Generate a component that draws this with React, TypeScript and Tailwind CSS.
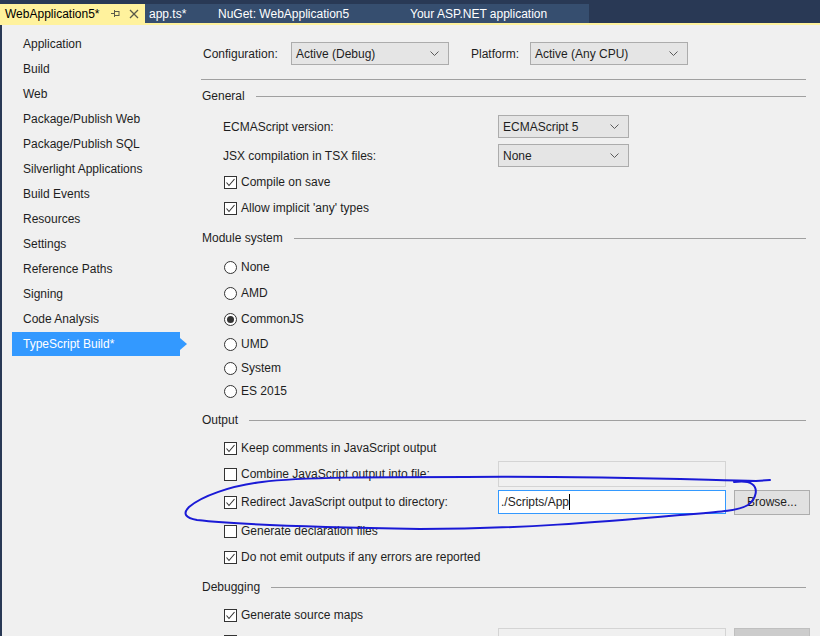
import React from 'react'

const font = { fontFamily: '"Liberation Sans", Arial, sans-serif' }

const sideItems = [
  'Application',
  'Build',
  'Web',
  'Package/Publish Web',
  'Package/Publish SQL',
  'Silverlight Applications',
  'Build Events',
  'Resources',
  'Settings',
  'Reference Paths',
  'Signing',
  'Code Analysis',
  'TypeScript Build*',
]

function Chevron() {
  return (
    <svg width="9" height="5" viewBox="0 0 9 5" className="shrink-0">
      <polyline points="0.5,0.5 4.5,4.5 8.5,0.5" fill="none" stroke="#5a5a5a" strokeWidth="1" />
    </svg>
  )
}

function Select({ value, width }: { value: string; width: string }) {
  return (
    <div className={`${width} h-[23px] flex items-center justify-between bg-[#e5e5e5] border border-[#acacac] pl-[4px] pr-[9px] text-[#1e1e1e]`}>
      <span>{value}</span>
      <Chevron />
    </div>
  )
}

function CheckBox({ checked }: { checked: boolean }) {
  return (
    <svg width="13" height="13" viewBox="0 0 13 13" className="shrink-0">
      <rect x="0.5" y="0.5" width="12" height="12" fill="#ffffff" stroke="#333333" />
      {checked && <polyline points="2.5,6.5 5,9.5 10.5,3" fill="none" stroke="#333333" strokeWidth="1.1" />}
    </svg>
  )
}

function Radio({ checked }: { checked: boolean }) {
  return (
    <svg width="13" height="13" viewBox="0 0 13 13" className="shrink-0">
      <circle cx="6.5" cy="6.5" r="6" fill="#ffffff" stroke="#333333" />
      {checked && <circle cx="6.5" cy="6.5" r="3.5" fill="#333333" />}
    </svg>
  )
}

function Section({ title, h }: { title: string; h: string }) {
  return (
    <div className={`flex items-center ${h} pl-px mr-[4px]`}>
      <span>{title}</span>
      <div className="flex-1 h-px bg-[#a0a0a0] ml-[11px]" />
    </div>
  )
}

function CheckRow({ label, checked, h, children }: { label: string; checked: boolean; h: string; children?: React.ReactNode }) {
  return (
    <div className={`flex items-center ${h} pl-[22px]`}>
      <div className="w-[275px] flex items-center gap-[4px] pl-px">
        <CheckBox checked={checked} />
        <span>{label}</span>
      </div>
      {children}
    </div>
  )
}

function RadioRow({ label, checked, h }: { label: string; checked?: boolean; h: string }) {
  return (
    <div className={`flex items-center ${h} pl-[23px] gap-[4px]`}>
      <Radio checked={!!checked} />
      <span>{label}</span>
    </div>
  )
}

function TabBar() {
  return (
    <div className="bg-[#293955] h-[25px] flex flex-col">
      <div className="h-[4px]" />
      <div className="flex h-[19px] text-[12px]">
        <div className="w-[145px] bg-[#fff29d] flex items-center pl-[5px] text-black">
          <span>WebApplication5*</span>
          <svg width="9" height="9" viewBox="0 0 9 9" className="ml-[11px]">
            <line x1="0" y1="4.5" x2="3" y2="4.5" stroke="#5a5a4a" />
            <line x1="3.5" y1="1" x2="3.5" y2="8" stroke="#5a5a4a" />
            <rect x="3.5" y="2.5" width="4.5" height="4" fill="none" stroke="#5a5a4a" />
          </svg>
          <svg width="10" height="10" viewBox="0 0 10 10" className="ml-[9px]">
            <line x1="1" y1="1" x2="9" y2="9" stroke="#5a5a4a" strokeWidth="1.3" />
            <line x1="9" y1="1" x2="1" y2="9" stroke="#5a5a4a" strokeWidth="1.3" />
          </svg>
        </div>
        <div className="flex bg-[#364e6f] text-white">
          <div className="w-[69px] flex items-center pl-[4px]">app.ts*</div>
          <div className="w-[192px] flex items-center pl-[4px]">NuGet: WebApplication5</div>
          <div className="w-[183px] flex items-center pl-[4px]">Your ASP.NET application</div>
        </div>
      </div>
      <div className="h-[2px] bg-[#fff29d]" />
    </div>
  )
}

function Sidebar() {
  return (
    <div className="w-[199px] shrink-0 pt-[6px] pl-[10px]">
      {sideItems.map((item) =>
        item === 'TypeScript Build*' ? (
          <div key={item} className="flex items-center h-[25px]">
            <div className="w-[168px] h-[24px] bg-[#3399ff] text-white flex items-center pl-[11px]">{item}</div>
            <svg width="7" height="12" viewBox="0 0 7 12">
              <polygon points="0,0 7,6 0,12" fill="#3399ff" />
            </svg>
          </div>
        ) : (
          <div key={item} className="h-[25px] flex items-center pl-[11px]">
            {item}
          </div>
        ),
      )}
    </div>
  )
}

function Panel() {
  return (
    <div className="flex-1 pr-[10px]">
      {/* configuration row */}
      <div className="flex items-center mt-[17px] h-[23px] pl-[2px]">
        <span className="w-[88px]">Configuration:</span>
        <Select value="Active (Debug)" width="w-[158px]" />
        <span className="w-[59px] ml-[22px]">Platform:</span>
        <Select value="Active (Any CPU)" width="w-[158px]" />
      </div>
      <div className="h-px bg-[#a0a0a0] mt-[14px] mr-[4px]" />

      <Section title="General" h="h-[32px]" />
      <div className="flex items-center h-[29px] pl-[22px]">
        <span className="w-[275px]">ECMAScript version:</span>
        <Select value="ECMAScript 5" width="w-[131px]" />
      </div>
      <div className="flex items-center h-[29px] pl-[22px]">
        <span className="w-[275px]">JSX compilation in TSX files:</span>
        <Select value="None" width="w-[131px]" />
      </div>
      <CheckRow label="Compile on save" checked h="h-[24px]" />
      <CheckRow label="Allow implicit 'any' types" checked h="h-[28px]" />

      <Section title="Module system" h="h-[32px]" />
      <RadioRow label="None" h="h-[26px]" />
      <RadioRow label="AMD" h="h-[26px]" />
      <RadioRow label="CommonJS" checked h="h-[26px]" />
      <RadioRow label="UMD" h="h-[24px]" />
      <RadioRow label="System" h="h-[24px]" />
      <RadioRow label="ES 2015" h="h-[22px]" />

      <Section title="Output" h="h-[36px]" />
      <CheckRow label="Keep comments in JavaScript output" checked h="h-[20px]" />
      <CheckRow label="Combine JavaScript output into file:" checked={false} h="h-[32px]">
        <div className="w-[228px] h-[26px] border border-[#d4d4d4] bg-[#f0f0f0]" />
      </CheckRow>
      <CheckRow label="Redirect JavaScript output to directory:" checked h="h-[24px]">
        <div className="w-[228px] h-[24px] border border-[#3399ff] bg-white flex items-center pl-[2px]">
          <span>./Scripts/App</span>
          <span className="w-px h-[16px] bg-black" />
        </div>
        <div className="w-[76px] h-[25px] ml-[8px] bg-[#e1e1e1] border border-[#adadad] flex items-center justify-center">
          Browse...
        </div>
      </CheckRow>
      <CheckRow label="Generate declaration files" checked={false} h="h-[34px]" />
      <CheckRow label="Do not emit outputs if any errors are reported" checked h="h-[18px]" />

      <Section title="Debugging" h="h-[42px]" />
      <CheckRow label="Generate source maps" checked h="h-[14px]" />
      <CheckRow label="Specify root directory of TypeScript files:" checked={false} h="h-[38px]">
        <div className="w-[228px] h-[26px] border border-[#d4d4d4] bg-[#f0f0f0]" />
        <div className="w-[76px] h-[26px] ml-[8px] bg-[#cccccc] border border-[#bfbfbf]" />
      </CheckRow>
    </div>
  )
}

export default function App() {
  return (
    <div className="relative w-[820px] h-[636px] overflow-hidden bg-[#f0f0f0] text-[12px] text-[#1e1e1e]" style={font}>
      <TabBar />
      <div className="flex h-[611px]">
        <div className="w-[2px] shrink-0 bg-[#293955]" />
        <Sidebar />
        <Panel />
      </div>
      {/* hand-drawn annotation */}
      <svg className="absolute left-0 top-0 pointer-events-none" width="820" height="636" viewBox="0 0 820 636">
        <path
          d="M770,480 L756,481 C700,480 600,476 466,477 C380,477 300,477 262,482 C230,486 202,496 189,507 C182,514 186,518 197,520 C232,524 300,527 420,529 C520,529 600,522 680,515 C718,512 738,511 748,505 C757,498 758,488 752,484 C748,481 742,481 734,482"
          fill="none"
          stroke="#1a1ad6"
          strokeWidth="2"
          strokeLinecap="round"
        />
      </svg>
    </div>
  )
}
